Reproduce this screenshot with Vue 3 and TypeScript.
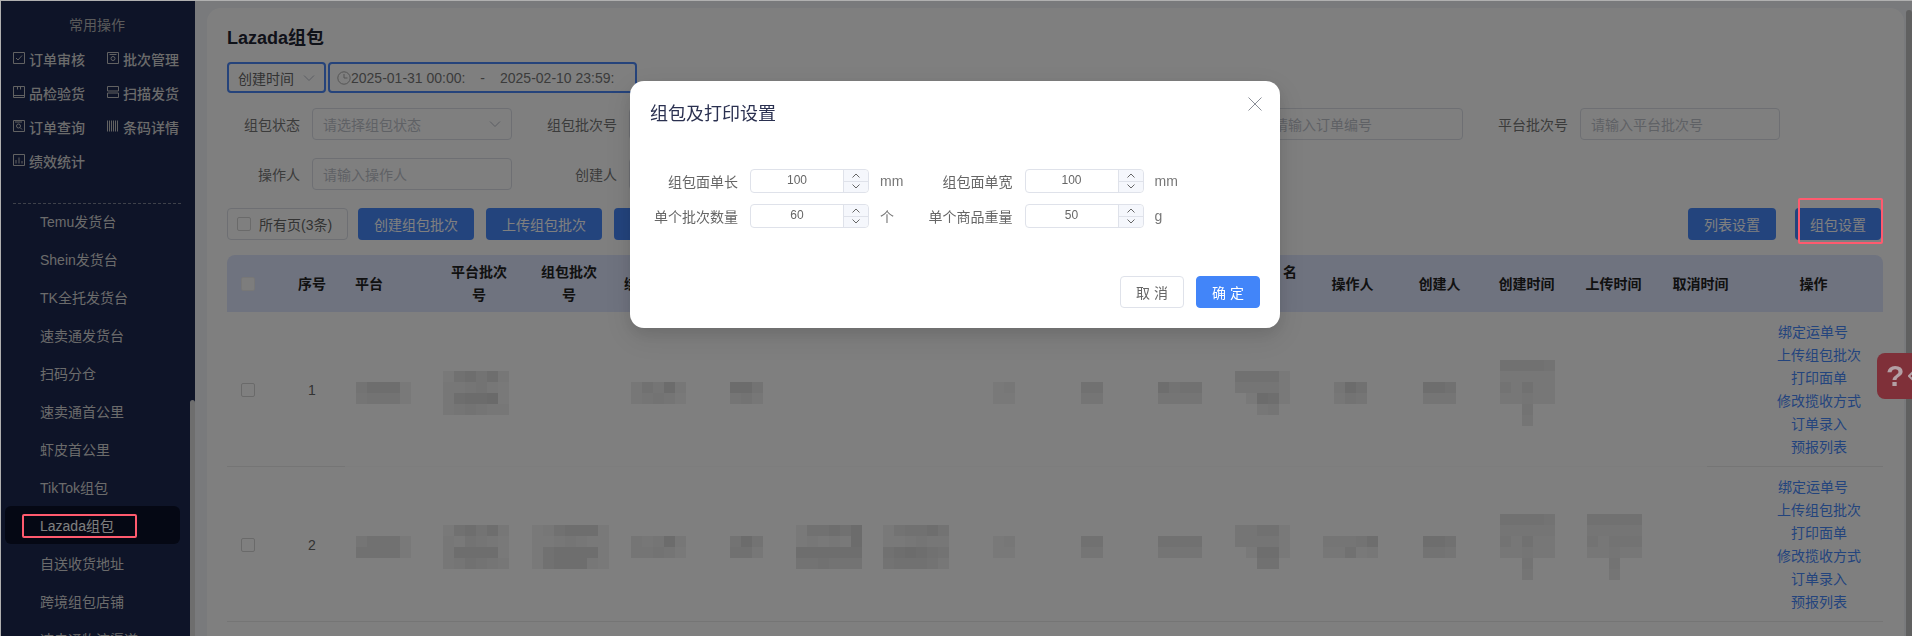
<script setup lang="ts">
interface Mosaic { col: number; ml: number; tiles: string[] }

const quickOps = [
  { label: '订单审核', d: 'M.5.5h11v11H.5z M3 6l2 2 4-4.5' },
  { label: '批次管理', d: 'M.5.5h11v11H.5z M2.5 2.5h7 M4 6.5a2 2 0 1 0 4 0a2 2 0 1 0-4 0' },
  { label: '品检验货', d: 'M.5.5h11v11H.5z M.5 9.5h11 M4.5.5v3 M7.5.5v3' },
  { label: '扫描发货', d: 'M.5.5h11v4.5H.5z M.5 7h11v4.5H.5z' },
  { label: '订单查询', d: 'M.5.5h11v11H.5z M2 2h7 M3.5 6a2 2 0 1 0 4 0a2 2 0 1 0-4 0 M7 7.5l2 2' },
  { label: '条码详情', d: 'M.5 .5v11 M2.5 .5v11 M4.5 .5v11 M6.5 .5v11 M8.5 .5v11 M10.5 .5v11' },
  { label: '绩效统计', d: 'M.5.5h11v11H.5z M3 9.5V6 M6 9.5V3.5 M9 9.5V7' },
]

const navItems = [
  'Temu发货台', 'Shein发货台', 'TK全托发货台', '速卖通发货台', '扫码分仓', '速卖通首公里',
  '虾皮首公里', 'TikTok组包', 'Lazada组包', '自送收货地址', '跨境组包店铺', '速卖通物流渠道',
]

const headers = [
  '', '序号', '平台', '平台批次\n号', '组包批次\n号', '绑定运单号', '', '', '', '', '', '',
  '揽收人\u00a0名\n称', '操作人', '创建人', '创建时间', '上传时间', '取消时间', '操作',
]

const actions = ['绑定运单号', '上传组包批次', '打印面单', '修改揽收方式', '订单录入', '预报列表']

const rows: { no: number; cls: string; top: number; mosaics: Mosaic[] }[] = [
  {
    no: 1, cls: 'row-one', top: 6,
    mosaics: [
      { col: 2, ml: 1, tiles: ['46661', '34441'] },
      { col: 3, ml: 8, tiles: ['1564620', '2234210', '2677810', '2343220'] },
      { col: 5, ml: 16, tiles: ['25372', '23431'] },
      { col: 6, ml: 27, tiles: ['774', '342'] },
      { col: 9, ml: 31, tiles: ['12', '11'] },
      { col: 10, ml: 31, tiles: ['55', '33'] },
      { col: 11, ml: 21, tiles: ['6455', '3333'] },
      { col: 12, ml: 10, tiles: ['55551', '33331', '01761', '00230'] },
      { col: 13, ml: 25, tiles: ['375', '243'] },
      { col: 14, ml: 27, tiles: ['665', '333'] },
      { col: 15, ml: 17, tiles: ['55554', '22222', '42522', '22322', '00400', '00300'] },
    ],
  },
  {
    no: 2, cls: 'row-two', top: 5,
    mosaics: [
      { col: 2, ml: 1, tiles: ['35551', '55551'] },
      { col: 3, ml: 8, tiles: ['1564620', '2143210', '2666610', '2354320'] },
      { col: 4, ml: 9, tiles: ['1256661', '1123211', '1566661', '1566621'] },
      { col: 5, ml: 16, tiles: ['32372', '33431'] },
      { col: 6, ml: 27, tiles: ['474', '552'] },
      { col: 7, ml: 5, tiles: ['155657', '121217', '666666', '445444'] },
      { col: 8, ml: 14, tiles: ['145564', '112322', '567654', '455542'] },
      { col: 9, ml: 31, tiles: ['12', '11'] },
      { col: 10, ml: 31, tiles: ['55', '33'] },
      { col: 11, ml: 21, tiles: ['5555', '3333'] },
      { col: 12, ml: 10, tiles: ['33551', '33331', '01661', '00550'] },
      { col: 13, ml: 14, tiles: ['33346', '22512'] },
      { col: 14, ml: 27, tiles: ['665', '443'] },
      { col: 15, ml: 17, tiles: ['55554', '33333', '42522', '22322', '00400', '00300'] },
      { col: 16, ml: 17, tiles: ['55555', '33333', '42444', '22322', '00400', '00300'] },
    ],
  },
]

const colIndexes = Array.from({ length: 16 }, (_, i) => i + 2)
const mosaicAt = (row: { mosaics: Mosaic[] }, col: number) => row.mosaics.find((m) => m.col === col)
const tileStyle = (d: string) => ({ background: `rgba(0,0,0,${d === '0' ? 0 : 0.03 + Number(d) * 0.017})` })
</script>

<template>
  <div class="root">
    <aside class="sidebar">
      <div class="quick-title">常用操作</div>
      <div class="quick-grid">
        <div v-for="op in quickOps" :key="op.label" class="quick-item">
          <svg class="quick-icon" viewBox="0 0 12 12"><path :d="op.d" /></svg>
          <span>{{ op.label }}</span>
        </div>
      </div>
      <div class="dash"></div>
      <nav class="nav">
        <div v-for="item in navItems" :key="item" class="nav-item" :class="{ active: item === 'Lazada组包' }">
          {{ item }}
          <i v-if="item === 'Lazada组包'" class="mark mark-nav"></i>
        </div>
      </nav>
      <div class="side-thumb"></div>
    </aside>

    <main class="main">
      <section class="card">
        <h1 class="title">Lazada组包</h1>

        <div class="date-row">
          <div class="date-select">
            <span>创建时间</span>
            <svg class="chev-big" viewBox="0 0 12 12"><path d="M1 3.5l5 5 5-5" /></svg>
          </div>
          <div class="date-range">
            <svg class="clock" viewBox="0 0 14 14"><circle cx="7" cy="7" r="6.2" /><path d="M7 3v4h3.5" /></svg>
            <span class="date-text">2025-01-31 00:00:</span>
            <span class="date-dash">-</span>
            <span class="date-text">2025-02-10 23:59:</span>
          </div>
        </div>

        <div class="filters">
          <div class="field">
            <label>组包状态</label>
            <div class="input select"><span>请选择组包状态</span>
              <svg class="chev-big" viewBox="0 0 12 12"><path d="M1 3.5l5 5 5-5" /></svg>
            </div>
          </div>
          <div class="field"><label>组包批次号</label><div class="input"></div></div>
          <div class="field"><label></label><div class="input"></div></div>
          <div class="field"><label></label><div class="input"><span>请输入订单编号</span></div></div>
          <div class="field"><label>平台批次号</label><div class="input"><span>请输入平台批次号</span></div></div>
          <div class="field"><label>操作人</label><div class="input"><span>请输入操作人</span></div></div>
          <div class="field"><label>创建人</label><div class="input"></div></div>
        </div>

        <div class="toolbar">
          <div class="all-pages"><i class="check"></i><span>所有页(3条)</span></div>
          <button class="btn">创建组包批次</button>
          <button class="btn">上传组包批次</button>
          <button class="btn"></button>
          <div class="spacer"></div>
          <button class="btn btn-list">列表设置</button>
          <div class="btn-wrap">
            <button class="btn btn-set">组包设置</button>
            <i class="mark mark-btn"></i>
          </div>
        </div>

        <div class="table">
          <div class="thead tgrid">
            <div v-for="(h, i) in headers" :key="i" class="th" :class="{ 'th-left': i === 2 }">
              <i v-if="i === 0" class="check check-head"></i>
              <template v-else>{{ h }}</template>
            </div>
          </div>
          <div v-for="row in rows" :key="row.no" class="tgrid trow" :class="row.cls">
            <div class="td"><i class="check"></i></div>
            <div class="td no">{{ row.no }}</div>
            <div v-for="c in colIndexes" :key="c" class="td td-blur">
              <div
                v-if="mosaicAt(row, c)"
                class="mosaic"
                :style="{ marginLeft: mosaicAt(row, c)!.ml + 'px', marginTop: row.top + 'px' }"
              >
                <div v-for="(line, li) in mosaicAt(row, c)!.tiles" :key="li" class="mosaic-line">
                  <b v-for="(t, ti) in line" :key="ti" :style="tileStyle(t)"></b>
                </div>
              </div>
            </div>
            <div class="td td-actions">
              <a v-for="(a, ai) in actions" :key="a" :class="{ shifted: ai === 0 }">{{ a }}</a>
            </div>
          </div>
        </div>
      </section>
    </main>
    <div class="page-bar"></div>

    <div class="mask"></div>

    <div class="modal">
      <div class="modal-title">组包及打印设置</div>
      <svg class="modal-close" viewBox="0 0 14 14"><path d="M.5.5l13 13M13.5.5l-13 13" /></svg>
      <div class="form">
        <div class="form-field">
          <label>组包面单长</label>
          <div class="num"><span>100</span><div class="num-arrows"><em><svg viewBox="0 0 8 5"><path d="M.5 4.5L4 1l3.5 3.5" /></svg></em><em><svg viewBox="0 0 8 5"><path d="M.5.5L4 4 7.5.5" /></svg></em></div></div>
          <span class="unit">mm</span>
        </div>
        <div class="form-field">
          <label>组包面单宽</label>
          <div class="num"><span>100</span><div class="num-arrows"><em><svg viewBox="0 0 8 5"><path d="M.5 4.5L4 1l3.5 3.5" /></svg></em><em><svg viewBox="0 0 8 5"><path d="M.5.5L4 4 7.5.5" /></svg></em></div></div>
          <span class="unit">mm</span>
        </div>
        <div class="form-field">
          <label>单个批次数量</label>
          <div class="num"><span>60</span><div class="num-arrows"><em><svg viewBox="0 0 8 5"><path d="M.5 4.5L4 1l3.5 3.5" /></svg></em><em><svg viewBox="0 0 8 5"><path d="M.5.5L4 4 7.5.5" /></svg></em></div></div>
          <span class="unit">个</span>
        </div>
        <div class="form-field">
          <label>单个商品重量</label>
          <div class="num"><span>50</span><div class="num-arrows"><em><svg viewBox="0 0 8 5"><path d="M.5 4.5L4 1l3.5 3.5" /></svg></em><em><svg viewBox="0 0 8 5"><path d="M.5.5L4 4 7.5.5" /></svg></em></div></div>
          <span class="unit">g</span>
        </div>
      </div>
      <div class="modal-foot">
        <button class="m-btn">取 消</button>
        <button class="m-btn primary">确 定</button>
      </div>
    </div>

    <div class="help">
      <span class="help-q">?</span>
      <svg class="help-arrow" viewBox="0 0 6 10"><path d="M5 1L1 5l4 4" /></svg>
    </div>
  </div>
</template>

<style>
html, body { margin: 0; height: 636px; overflow: hidden; background: #b0b0b0; }
</style>

<style scoped>
.root {
  height: 635px;
  padding: 1px 0 0 1px;
  display: flex;
  overflow: hidden;
  background: #f2f4f8;
  box-shadow: inset 0 1px 0 #b0b0b0, inset 1px 0 0 #b0b0b0;
  font-family: "Liberation Sans", "Noto Sans CJK SC", sans-serif;
  font-size: 14px;
}
button { font-family: inherit; cursor: pointer; }
.sidebar {
  flex: 0 0 194px;
  width: 194px;
  height: 635px;
  background: #1c2850;
  color: #d6d6d6;
  overflow: hidden;
  position: relative;
}
.quick-title { padding-top: 14px; height: 20px; line-height: 20px; text-align: center; width: 192px; color: #b6b6b6; }
.quick-grid {
  margin-top: 7px;
  display: grid;
  grid-template-columns: 94px 84px;
  grid-auto-rows: 34px;
  padding-left: 12px;
}
.quick-item { display: flex; align-items: center; gap: 4px; white-space: nowrap; font-weight: 500; }
.quick-icon { width: 12px; height: 12px; fill: none; stroke: #c4c4c4; stroke-width: 1; flex: none; margin-top: -2px; }
.dash { margin: 25px 14px 0 12px; border-top: 1px dashed #7d8294; }
.nav { margin-top: -2px; }
.nav-item {
  position: relative;
  height: 38px;
  line-height: 40px;
  padding-left: 39px;
  white-space: nowrap;
  width: 175px;
  box-sizing: border-box;
}
.nav-item.active { background: #0a1028; border-radius: 6px; margin-left: 4px; padding-left: 35px; color: #fff; }
.mark { position: absolute; z-index: 20; border: 2px solid #ff5a6e; border-radius: 2px; box-sizing: border-box; display: block; }
.mark-nav { left: 17px; top: 8px; width: 115px; height: 24px; }
.side-thumb {
  position: absolute;
  right: 0;
  top: 399px;
  bottom: 0;
  width: 5px;
  background: #dcdcdc;
  border-radius: 3px 3px 0 0;
}
.main { flex: 1; min-width: 0; padding: 7px 8px 0 12px; height: 628px; }
.card {
  background: #fff;
  height: 100%;
  padding: 18px 21px 0 20px;
  border-radius: 14px 14px 0 0;
  box-sizing: border-box;
}
.title { margin: 0; font-size: 18px; line-height: 24px; font-weight: 700; color: #1f2433; }
.date-row { margin-top: 12px; display: flex; gap: 2px; height: 30px; }
.date-select, .date-range {
  border: 2px solid #4a86f7;
  border-radius: 4px;
  box-sizing: border-box;
  display: flex;
  align-items: center;
  color: #666;
  height: 31px;
}
.date-select { width: 99px; padding: 0 9px; justify-content: space-between; flex: none; }
.chev-big { width: 12px; height: 12px; fill: none; stroke: #b8bcc6; stroke-width: 1; flex: none; }
.date-range { width: 309px; padding-left: 7px; flex: none; color: #777; }
.clock { width: 14px; height: 14px; fill: none; stroke: #aaa; stroke-width: 1; flex: none; }
.date-text { width: 114px; white-space: nowrap; flex: none; }
.date-dash { width: 35px; text-align: center; flex: none; }
.filters {
  margin-top: 16px;
  display: grid;
  grid-template-columns: repeat(5, 285px);
  column-gap: 32px;
  row-gap: 18px;
}
.field { display: flex; align-items: center; gap: 12px; height: 32px; }
.field label { width: 73px; text-align: right; white-space: nowrap; color: #777; flex: none; direction: rtl; }
.input {
  width: 200px;
  height: 32px;
  box-sizing: border-box;
  border: 1px solid #dcdfe6;
  border-radius: 4px;
  padding: 0 10px;
  color: #bfc3cb;
  display: flex;
  align-items: center;
  justify-content: space-between;
  white-space: nowrap;
}
.toolbar { margin-top: 18px; padding-right: 2px; display: flex; align-items: center; height: 32px; gap: 12px; }
.all-pages {
  width: 121px;
  height: 32px;
  box-sizing: border-box;
  border: 1px solid #dcdfe6;
  border-radius: 4px;
  padding-left: 9px;
  display: flex;
  align-items: center;
  gap: 8px;
  color: #666;
  white-space: nowrap;
  margin-right: -2px;
  flex: none;
}
.check {
  display: block;
  width: 14px;
  height: 14px;
  border: 1px solid #d4d4d4;
  border-radius: 2px;
  box-sizing: border-box;
  background: #fff;
  flex: none;
}
.check-head { background: #fafafa; border-color: #eee; }
.btn {
  width: 116px;
  height: 32px;
  border: none;
  background: #4788fb;
  color: #fff;
  border-radius: 4px;
  font-size: 14px;
  padding: 0;
  flex: none;
}
.spacer { flex: 1; }
.btn-list { width: 88px; margin-right: 7px; }
.btn-wrap { position: relative; width: 86px; height: 32px; flex: none; }
.btn-set { width: 86px; }
.mark-btn { left: 3px; top: -10px; width: 85px; height: 46px; }
.table { margin-top: 15px; width: 1656px; }
.tgrid {
  display: grid;
  grid-template-columns: 42px 86px 80px 88px 92px 88px 88px 78px 93px 88px 87px 88px 84px 87px 87px 87px 87px 87px 139px;
}
.thead { height: 57px; background: #dfe6ff; border-radius: 8px 8px 0 0; font-weight: 700; color: #222; }
.th {
  display: flex;
  align-items: center;
  justify-content: center;
  text-align: center;
  white-space: pre-line;
  line-height: 23px;
  min-width: 0;
  padding-top: 1px;
}
.th-left { justify-content: flex-start; }
.trow {
  height: 155px;
  background-position: left bottom;
  background-size: 100% 1px;
  background-repeat: no-repeat;
}
.row-one { background-image: linear-gradient(to right, #eaeaea 118px, #fbfbfb 118px 1480px, #eaeaea 1480px); }
.row-two { background-image: linear-gradient(#eaeaea, #eaeaea); }
.td { display: flex; align-items: center; justify-content: center; min-width: 0; }
.no { color: #666; font-size: 14px; }
.td-blur { justify-content: flex-start; }
.mosaic { flex: none; display: flex; flex-direction: column; }
.mosaic-line { display: flex; height: 11px; }
.mosaic-line b { display: block; width: 11px; height: 11px; }
.td-actions { flex-direction: column; }
.td-actions a { display: block; height: 23px; line-height: 23px; color: #4788fb; white-space: nowrap; margin-left: 11px; }
.td-actions a.shifted { padding-right: 12px; }
.page-bar { position: fixed; right: 0; top: 10px; bottom: 0; width: 6px; background: #c0c0c0; border-radius: 3px 3px 0 0; }
.mask { position: fixed; left: 1px; top: 1px; right: 0; bottom: 0; background: rgba(0, 0, 0, .5); z-index: 10; }
.modal {
  position: fixed;
  left: 630px;
  top: 81px;
  width: 650px;
  height: 247px;
  background: #fff;
  border-radius: 14px;
  z-index: 11;
  box-shadow: 0 6px 16px rgba(0,0,0,.1), 0 9px 28px 8px rgba(0,0,0,.06);
  display: flex;
  flex-direction: column;
}
.modal-title { margin: 21px 0 0 20px; font-size: 18px; line-height: 24px; color: #2a3050; }
.modal-close { position: absolute; left: 618px; top: 16px; width: 14px; height: 14px; fill: none; stroke: #8b8f98; stroke-width: 1; }
.form {
  margin-top: 43px;
  display: grid;
  grid-template-columns: repeat(2, 274.5px);
  row-gap: 11px;
}
.form-field { display: flex; align-items: center; height: 24px; }
.form-field label { width: 108px; text-align: right; color: #666; flex: none; white-space: nowrap; }
.num {
  margin-left: 12px;
  width: 119px;
  height: 24px;
  box-sizing: border-box;
  border: 1px solid #dfe2ea;
  border-radius: 4px;
  display: flex;
  align-items: stretch;
  font-size: 12px;
  color: #666;
  flex: none;
}
.num > span { flex: 1; text-align: center; line-height: 20px; }
.num-arrows { width: 24px; background: #f5f7fc; border-left: 1px solid #dfe2ea; border-radius: 0 4px 4px 0; display: flex; flex-direction: column; }
.num-arrows em { flex: 1; display: flex; align-items: center; justify-content: center; }
.num-arrows em:first-child { border-bottom: 1px solid #dfe2ea; }
.num-arrows svg { width: 8px; height: 5px; fill: none; stroke: #666; stroke-width: 1; }
.unit { margin-left: 11px; color: #777; }
.modal-foot { margin-top: auto; padding: 0 20px 20px 0; display: flex; justify-content: flex-end; gap: 12px; }
.m-btn {
  width: 64px;
  height: 32px;
  box-sizing: border-box;
  border: 1px solid #dfe2ea;
  border-radius: 4px;
  background: #fff;
  color: #666;
  font-size: 14px;
  padding: 0;
}
.m-btn.primary { background: #4285f9; border-color: #4285f9; color: #fff; }
.help {
  position: fixed;
  right: 0;
  top: 353px;
  width: 35px;
  height: 46px;
  background: #7f3039;
  border-radius: 8px 0 0 8px;
  z-index: 20;
  display: flex;
  align-items: center;
  overflow: hidden;
  padding-left: 9px;
  box-sizing: border-box;
}
.help-q { font-size: 30px; font-weight: 700; color: #b3a0a5; line-height: 46px; width: 19px; flex: none; }
.help-arrow { width: 6px; height: 10px; fill: none; stroke: #b3a0a5; stroke-width: 2; flex: none; margin-left: 3px; }
</style>
